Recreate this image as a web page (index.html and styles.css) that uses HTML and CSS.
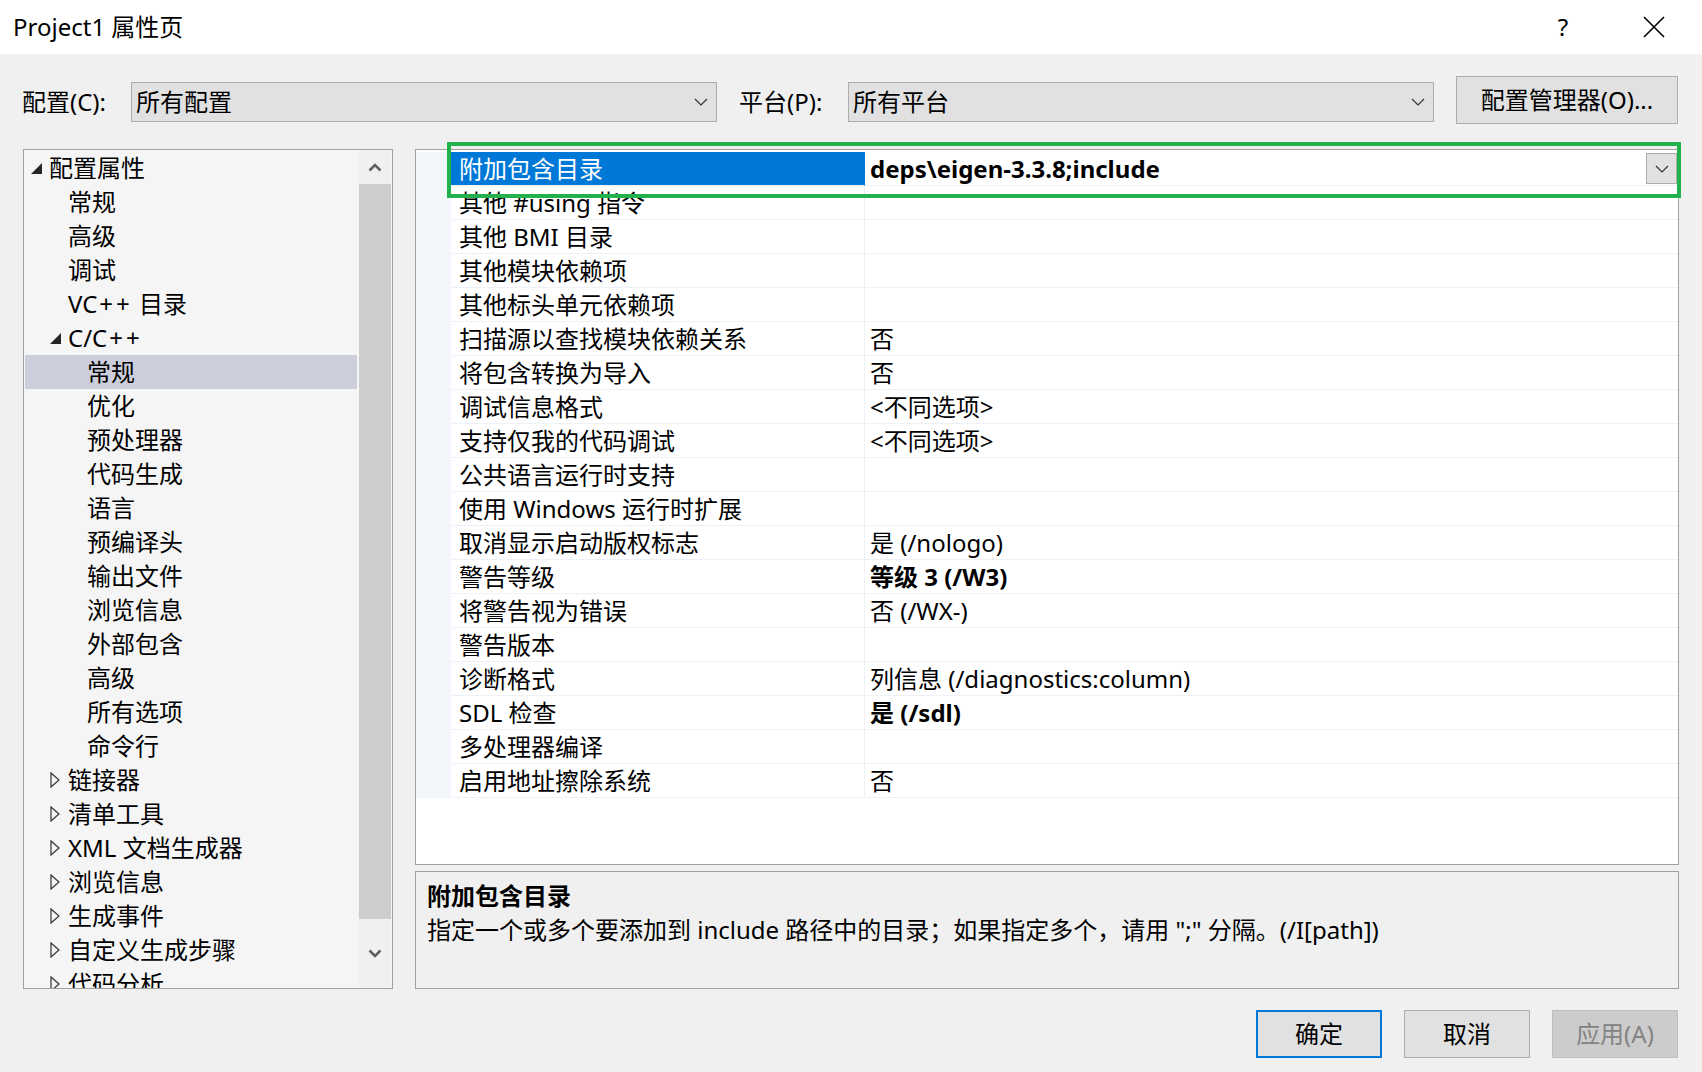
FILE: index.html
```html
<!DOCTYPE html>
<html lang="zh-CN">
<head>
<meta charset="utf-8">
<title>Project1 属性页</title>
<link rel="stylesheet" href="styles.css">
</head>
<body>
<div class="titlebar">
  <div class="title">Project1 属性页</div>
  <div class="help">?</div>
  <svg class="close" width="22" height="22" viewBox="0 0 22 22"><path d="M1 1 L21 21 M21 1 L1 21" stroke="#000" stroke-width="1.6" fill="none"/></svg>
</div>

<div class="config-row">
  <div class="label">配置(C):</div>
  <div class="combo"><span>所有配置</span><svg width="14" height="8" viewBox="0 0 14 8"><path d="M1 1 L7 7 L13 1" stroke="#333" stroke-width="1.2" fill="none"/></svg></div>
  <div class="label second">平台(P):</div>
  <div class="combo"><span>所有平台</span><svg width="14" height="8" viewBox="0 0 14 8"><path d="M1 1 L7 7 L13 1" stroke="#333" stroke-width="1.2" fill="none"/></svg></div>
  <div class="btn manager">配置管理器(O)...</div>
</div>

<div class="content">
  <div class="tree">
    <div class="tree-list">
      <div class="node l0"><span class="exp"><svg width="11" height="11" viewBox="0 0 11 11"><polygon points="11,0 11,11 0,11" fill="#262626"/></svg></span>配置属性</div>
      <div class="node l1"><span class="exp"></span>常规</div>
      <div class="node l1"><span class="exp"></span>高级</div>
      <div class="node l1"><span class="exp"></span>调试</div>
      <div class="node l1"><span class="exp"></span>VC<span class="pp">++</span>&nbsp;目录</div>
      <div class="node l1"><span class="exp"><svg width="11" height="11" viewBox="0 0 11 11"><polygon points="11,0 11,11 0,11" fill="#262626"/></svg></span>C/C<span class="pp">++</span></div>
      <div class="node l2 selected"><span class="exp"></span>常规</div>
      <div class="node l2"><span class="exp"></span>优化</div>
      <div class="node l2"><span class="exp"></span>预处理器</div>
      <div class="node l2"><span class="exp"></span>代码生成</div>
      <div class="node l2"><span class="exp"></span>语言</div>
      <div class="node l2"><span class="exp"></span>预编译头</div>
      <div class="node l2"><span class="exp"></span>输出文件</div>
      <div class="node l2"><span class="exp"></span>浏览信息</div>
      <div class="node l2"><span class="exp"></span>外部包含</div>
      <div class="node l2"><span class="exp"></span>高级</div>
      <div class="node l2"><span class="exp"></span>所有选项</div>
      <div class="node l2"><span class="exp"></span>命令行</div>
      <div class="node l1"><span class="exp"><svg width="10" height="16" viewBox="0 0 10 16"><polygon points="1,1 9,8 1,15" fill="none" stroke="#333" stroke-width="1.2"/></svg></span>链接器</div>
      <div class="node l1"><span class="exp"><svg width="10" height="16" viewBox="0 0 10 16"><polygon points="1,1 9,8 1,15" fill="none" stroke="#333" stroke-width="1.2"/></svg></span>清单工具</div>
      <div class="node l1"><span class="exp"><svg width="10" height="16" viewBox="0 0 10 16"><polygon points="1,1 9,8 1,15" fill="none" stroke="#333" stroke-width="1.2"/></svg></span>XML 文档生成器</div>
      <div class="node l1"><span class="exp"><svg width="10" height="16" viewBox="0 0 10 16"><polygon points="1,1 9,8 1,15" fill="none" stroke="#333" stroke-width="1.2"/></svg></span>浏览信息</div>
      <div class="node l1"><span class="exp"><svg width="10" height="16" viewBox="0 0 10 16"><polygon points="1,1 9,8 1,15" fill="none" stroke="#333" stroke-width="1.2"/></svg></span>生成事件</div>
      <div class="node l1"><span class="exp"><svg width="10" height="16" viewBox="0 0 10 16"><polygon points="1,1 9,8 1,15" fill="none" stroke="#333" stroke-width="1.2"/></svg></span>自定义生成步骤</div>
      <div class="node l1"><span class="exp"><svg width="10" height="16" viewBox="0 0 10 16"><polygon points="1,1 9,8 1,15" fill="none" stroke="#333" stroke-width="1.2"/></svg></span>代码分析</div>
    </div>
    <div class="scrollbar">
      <div class="sb-btn"><svg width="14" height="9" viewBox="0 0 14 9"><path d="M1.5 7.5 L7 2 L12.5 7.5" stroke="#606060" stroke-width="2.6" fill="none"/></svg></div>
      <div class="sb-thumb"></div>
      <div class="sb-btn bottom"><svg width="14" height="9" viewBox="0 0 14 9"><path d="M1.5 1.5 L7 7 L12.5 1.5" stroke="#606060" stroke-width="2.6" fill="none"/></svg></div>
    </div>
  </div>

  <div class="right">
    <div class="grid">
      <div class="row sel"><div class="strip"></div><div class="name">附加包含目录</div><div class="value bold"><span class="vt">deps\eigen-3.3.8;include</span><span class="dd"><svg width="14" height="8" viewBox="0 0 14 8"><path d="M1 1 L7 7 L13 1" stroke="#333" stroke-width="1.2" fill="none"/></svg></span></div></div>
      <div class="row"><div class="strip"></div><div class="name">其他 #using 指令</div><div class="value"></div></div>
      <div class="row"><div class="strip"></div><div class="name">其他 BMI 目录</div><div class="value"></div></div>
      <div class="row"><div class="strip"></div><div class="name">其他模块依赖项</div><div class="value"></div></div>
      <div class="row"><div class="strip"></div><div class="name">其他标头单元依赖项</div><div class="value"></div></div>
      <div class="row"><div class="strip"></div><div class="name">扫描源以查找模块依赖关系</div><div class="value">否</div></div>
      <div class="row"><div class="strip"></div><div class="name">将包含转换为导入</div><div class="value">否</div></div>
      <div class="row"><div class="strip"></div><div class="name">调试信息格式</div><div class="value">&lt;不同选项&gt;</div></div>
      <div class="row"><div class="strip"></div><div class="name">支持仅我的代码调试</div><div class="value">&lt;不同选项&gt;</div></div>
      <div class="row"><div class="strip"></div><div class="name">公共语言运行时支持</div><div class="value"></div></div>
      <div class="row"><div class="strip"></div><div class="name">使用 Windows 运行时扩展</div><div class="value"></div></div>
      <div class="row"><div class="strip"></div><div class="name">取消显示启动版权标志</div><div class="value">是 (/nologo)</div></div>
      <div class="row"><div class="strip"></div><div class="name">警告等级</div><div class="value bold">等级 3 (/W3)</div></div>
      <div class="row"><div class="strip"></div><div class="name">将警告视为错误</div><div class="value">否 (/WX-)</div></div>
      <div class="row"><div class="strip"></div><div class="name">警告版本</div><div class="value"></div></div>
      <div class="row"><div class="strip"></div><div class="name">诊断格式</div><div class="value">列信息 (/diagnostics:column)</div></div>
      <div class="row"><div class="strip"></div><div class="name">SDL 检查</div><div class="value bold">是 (/sdl)</div></div>
      <div class="row"><div class="strip"></div><div class="name">多处理器编译</div><div class="value"></div></div>
      <div class="row"><div class="strip"></div><div class="name">启用地址擦除系统</div><div class="value">否</div></div>
      <div class="highlight"></div>
    </div>
    <div class="desc">
      <div class="desc-title">附加包含目录</div>
      <div class="desc-text">指定一个或多个要添加到 include 路径中的目录；如果指定多个，请用 ";" 分隔。(/I[path])</div>
    </div>
  </div>
</div>

<div class="buttons">
  <div class="btn default">确定</div>
  <div class="btn">取消</div>
  <div class="btn disabled">应用(A)</div>
</div>
</body>
</html>
```

FILE: styles.css
```css
* { box-sizing: border-box; }
html, body { margin: 0; padding: 0; }
body {
  width: 1702px;
  height: 1072px;
  overflow: hidden;
  background: #f0f0f0;
  color: #000;
  font-family: "Noto Sans", "Noto Sans CJK SC", sans-serif;
  font-size: 24px;
}

/* title bar */
.titlebar {
  height: 54px;
  background: #fff;
  display: flex;
  align-items: center;
  padding-left: 13px;
}
.title { flex: 1; line-height: 30px; }
.help { width: 30px; text-align: center; margin-right: 65px; line-height: 30px; }
.close { margin-right: 37px; }

/* config row */
.config-row {
  margin-top: 22px;
  height: 48px;
  display: flex;
  align-items: center;
  padding-left: 22px;
}
.label { width: 109px; line-height: 34px; margin-top: 4px; }
.label.second { margin-left: 22px; }
.combo {
  width: 586px;
  height: 40px;
  margin-top: 4px;
  background: #e1e1e1;
  border: 1px solid #adadad;
  display: flex;
  align-items: center;
  justify-content: space-between;
  padding: 0 8px 0 4px;
  line-height: 34px;
}
.btn {
  height: 48px;
  width: 126px;
  background: #e1e1e1;
  border: 1px solid #adadad;
  display: flex;
  align-items: center;
  justify-content: center;
  line-height: 34px;
}
.btn.manager { width: 222px; margin-left: 22px; }
.btn.default { border: 2px solid #0078d7; }
.btn.disabled { background: #cccccc; border-color: #bfbfbf; color: #838383; }

/* content */
.content {
  margin-top: 25px;
  height: 840px;
  display: flex;
  gap: 22px;
  padding: 0 23px;
}
.tree {
  width: 370px;
  height: 840px;
  border: 1px solid #a0a0a0;
  background: #f5f5f5;
  display: flex;
}
.tree-list {
  flex: 1;
  overflow: hidden;
  padding: 1px 2px 0 1px;
}
.node {
  height: 34px;
  line-height: 34px;
  display: flex;
  align-items: center;
  white-space: nowrap;
}
.pp { letter-spacing: 3px; padding-left: 2px; }
.node.l0 { padding-left: 6px; }
.node.l1 { padding-left: 25px; }
.node.l2 { padding-left: 44px; }
.node.selected { background: #cccedb; }
.exp {
  width: 18px;
  height: 34px;
  display: flex;
  align-items: center;
  flex: none;
}
.scrollbar {
  width: 32px;
  margin: 0 1px 0 0;
  background: #f0f0f0;
  display: flex;
  flex-direction: column;
}
.sb-btn {
  height: 34px;
  display: flex;
  align-items: center;
  justify-content: center;
}
.sb-btn.bottom { flex: 1; align-items: center; }
.sb-thumb { height: 735px; background: #cdcdcd; }

.right {
  width: 1264px;
  display: flex;
  flex-direction: column;
  gap: 6px;
}
.grid {
  position: relative;
  height: 716px;
  border: 1px solid #a0a0a0;
  background: #fff;
  padding-top: 2px;
}
.row {
  display: flex;
  height: 34px;
}
.strip { width: 35px; background: #f3f6fb; flex: none; }
.name {
  width: 414px;
  flex: none;
  padding-left: 8px;
  line-height: 33px;
  border-bottom: 1px solid #eef1f6;
  border-right: 1px solid #eef1f6;
  white-space: nowrap;
}
.value {
  flex: 1;
  padding-left: 5px;
  line-height: 33px;
  border-bottom: 1px solid #eef1f6;
  white-space: nowrap;
  display: flex;
  align-items: center;
}
.bold { font-weight: 700; }
.row.sel .name { background: #0078d7; color: #fff; border-right-color: #0078d7; }
.vt { flex: 1; }
.dd {
  width: 31px;
  height: 31px;
  margin-right: 1px;
  background: #e1e1e1;
  border: 1px solid #adadad;
  display: flex;
  align-items: center;
  justify-content: center;
}
.highlight {
  position: absolute;
  left: 31px;
  top: -8px;
  width: 1234px;
  height: 56px;
  border: 4px solid #22b14c;
  z-index: 2;
}

.desc {
  height: 118px;
  border: 1px solid #a0a0a0;
  padding: 7px 11px;
}
.desc-title { font-weight: 700; line-height: 34px; }
.desc-text { line-height: 34px; white-space: nowrap; }

.buttons {
  margin-top: 21px;
  display: flex;
  justify-content: flex-end;
  gap: 22px;
  padding-right: 24px;
}
```
